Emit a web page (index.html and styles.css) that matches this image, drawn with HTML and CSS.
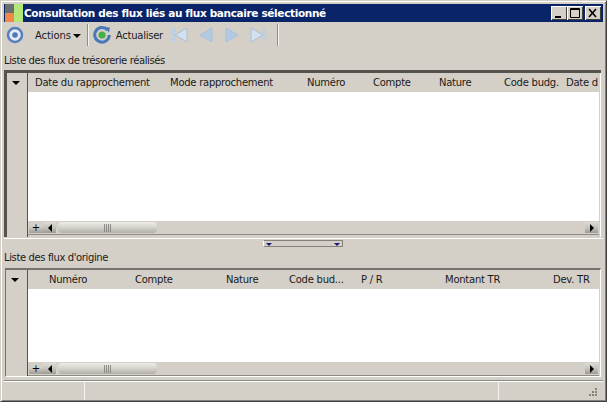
FILE: index.html
```html
<!DOCTYPE html>
<html lang="fr">
<head>
<meta charset="utf-8">
<title>Consultation des flux</title>
<link rel="stylesheet" href="styles.css">
</head>
<body>
<div class="window">
  <div class="titlebar">
    <svg class="app-icon" width="18" height="18" viewBox="0 0 18 18"><rect width="9" height="9" fill="#6a6f70"/><rect y="9" width="9" height="9" fill="#f0884a"/><rect x="9" width="9" height="18" fill="#b4e678"/></svg>
    <span class="title">Consultation des flux liés au flux bancaire sélectionné</span>
    <div class="winbtns">
      <span class="winbtn"><svg width="16" height="14" viewBox="0 0 16 14"><rect x="4" y="10" width="6" height="2" fill="#000"/></svg></span>
      <span class="winbtn"><svg width="16" height="14" viewBox="0 0 16 14"><path d="M3.500 2.500h9v9h-9zM3 3.500h10" fill="none" stroke="#000"/></svg></span>
      <span class="winbtn close"><svg width="16" height="14" viewBox="0 0 16 14"><path d="M4 3l7 8M11 3l-7 8" stroke="#000" stroke-width="1.600" fill="none"/></svg></span>
    </div>
  </div>

  <div class="toolbar">
    <svg class="ring" width="18" height="18" viewBox="0 0 18 18"><circle cx="9" cy="9" r="7" fill="#e6eaf2" stroke="#5580bd" stroke-width="2.500"/><circle cx="9" cy="9" r="2.800" fill="#4a78b8"/></svg>
    <span class="tb-text actions">Actions</span>
    <span class="caret"></span>
    <span class="sep"></span>
    <svg class="refresh" width="18" height="18" viewBox="0 0 18 18"><path d="M14.500 4A7.300 7.300 0 1 0 16.300 9" fill="none" stroke="#4a78b8" stroke-width="3"/><path d="M11.500 1l5.500 .5-1 5z" fill="#4a78b8"/><circle cx="9" cy="9" r="3.600" fill="#45b04a"/></svg>
    <span class="tb-text refresh-label">Actualiser</span>
    <svg class="nav first" width="17" height="16" viewBox="0 0 17 16"><path d="M1 1h3v14H1z" fill="#bccfe3"/><path d="M16 1v14L4 8z" fill="#d3e0ee" stroke="#a8c0da"/></svg>
    <svg class="nav prev" width="14" height="16" viewBox="0 0 14 16"><path d="M13 1v14L1 8z" fill="#b4cae2" stroke="#a8c0da"/></svg>
    <svg class="nav next" width="14" height="16" viewBox="0 0 14 16"><path d="M1 1v14l12-7z" fill="#b4cae2" stroke="#a8c0da"/></svg>
    <svg class="nav last" width="17" height="16" viewBox="0 0 17 16"><path d="M13 1h3v14h-3z" fill="#bccfe3"/><path d="M1 1v14l12-7z" fill="#d3e0ee" stroke="#a8c0da"/></svg>
    <span class="sep end"></span>
  </div>

  <div class="section-label first-label">Liste des flux de trésorerie réalisés</div>
  <section class="grid grid-top">
    <div class="grid-side"><span class="down"></span><span class="side-fill"></span></div>
    <div class="grid-main">
      <div class="headers cols-top">
        <span>Date du rapprochement</span><span>Mode rapprochement</span><span>Numéro</span><span>Compte</span><span>Nature</span><span>Code budg.</span><span>Date d</span>
      </div>
      <div class="rows"></div>
      <div class="scrollbar">
        <span class="sb-btn plus">+</span>
        <span class="sb-btn"><i class="arrow-l"></i></span>
        <span class="thumb"><i></i><i></i><i></i><i></i></span>
        <span class="sb-track"></span>
        <span class="sb-btn"><i class="arrow-r"></i></span>
      </div>
    </div>
  </section>

  <div class="splitter">
    <div class="split-handle"><i></i><i></i></div>
  </div>

  <div class="section-label second-label">Liste des flux d'origine</div>
  <section class="grid grid-bottom">
    <div class="grid-side"><span class="down"></span><span class="side-fill"></span></div>
    <div class="grid-main">
      <div class="headers cols-bottom">
        <span>Numéro</span><span>Compte</span><span>Nature</span><span>Code bud...</span><span>P / R</span><span>Montant TR</span><span>Dev. TR</span>
      </div>
      <div class="rows"></div>
      <div class="scrollbar">
        <span class="sb-btn plus">+</span>
        <span class="sb-btn"><i class="arrow-l"></i></span>
        <span class="thumb"><i></i><i></i><i></i><i></i></span>
        <span class="sb-track"></span>
        <span class="sb-btn"><i class="arrow-r"></i></span>
      </div>
    </div>
  </section>

  <footer class="statusbar">
    <span class="cell c1"></span>
    <span class="cell c2"></span>
    <span class="cell c3">
      <svg width="10" height="10" viewBox="0 0 10 10"><path d="M7 0h2v2H7zM4 3h2v2H4zM7 3h2v2H7zM1 6h2v2H1zM4 6h2v2H4zM7 6h2v2H7z" fill="#85827b"/></svg>
    </span>
  </footer>
</div>
</body>
</html>
```
FILE: styles.css
```css
* { box-sizing: border-box; }
html, body { margin: 0; padding: 0; }
body {
  width: 607px;
  height: 402px;
  overflow: hidden;
  background: #d4d0c8;
  font-family: "DejaVu Sans", sans-serif;
  font-size: 10px;
  color: #1a1a1a;
}
.window {
  width: 607px;
  height: 402px;
  display: flex;
  flex-direction: column;
  background: #d4d0c8;
  border-top: 1px solid #d4d0c8;
  border-left: 1px solid #d4d0c8;
  border-right: 1px solid #404040;
  border-bottom: 1px solid #404040;
  padding: 3px;
  box-shadow: inset 1px 1px 0 #fff, inset -1px -1px 0 #808080;
}

.titlebar {
  height: 18px;
  flex: none;
  background: #0a246a;
  display: flex;
  align-items: center;
}
.app-icon { flex: none; margin-left: 1px; }
.title {
  margin-left: 1px;
  color: #fff;
  font-weight: 700;
  font-size: 10.500px;
  letter-spacing: -0.35px;
  white-space: nowrap;
}
.winbtns { margin-left: auto; display: flex; margin-right: 2px; }
.winbtn {
  width: 16px;
  height: 14px;
  background: #d4d0c8;
  display: block;
  box-shadow: inset 1px 1px 0 #fff, inset -1px -1px 0 #404040;
}
.winbtn svg { display: block; }
.winbtn.close { margin-left: 2px; }

.toolbar {
  height: 26px;
  flex: none;
  display: flex;
  align-items: center;
  padding-left: 2px;
}
.tb-text { font-size: 10px; letter-spacing: -0.1px; white-space: nowrap; }
.actions { margin-left: 11px; }
.caret {
  margin-left: 2px;
  margin-top: 2px;
  border: 4px solid transparent;
  border-top-color: #000;
  border-bottom-width: 0;
}
.sep {
  width: 1px;
  height: 22px;
  margin-left: 6px;
  background: #8f8d87;
  box-shadow: 1px 0 0 #f4f3ef;
}
.refresh { margin-left: 5px; }
.refresh-label { margin-left: 5px; letter-spacing: -0.25px; }
.nav { flex: none; }
.first { margin-left: 8px; }
.prev { margin-left: 11px; }
.next { margin-left: 12px; }
.last { margin-left: 11px; }
.sep.end { margin-left: 10px; }

.section-label {
  flex: none;
  height: 15px;
  line-height: 15px;
  font-size: 10px;
  letter-spacing: -0.38px;
  white-space: nowrap;
}
.first-label { margin-top: 5px; }
.second-label { margin-top: 0; }

.grid {
  flex: none;
  display: flex;
  margin-right: 2px;
  background: #d4d0c8;
}
.grid-top {
  height: 167px;
  margin-top: 2px;
  border-top: 3px solid #55534e;
  border-left: 3px solid #55534e;
  padding-right: 2px;
  box-shadow: inset -1px 0 0 #fff;
}
.grid-bottom {
  height: 109px;
  margin-top: 3px;
  margin-left: 1px;
  border-top: 2px solid #75736d;
  border-left: 1px solid #75736d;
  border-right: 1px solid #fff;
  border-bottom: 1px solid #fff;
  padding-right: 1px;
}
.grid-side {
  width: 21px;
  flex: none;
  display: flex;
  flex-direction: column;
  border-right: 1px solid #55534e;
}
.grid-bottom .grid-side { width: 22px; }
.down {
  height: 19px;
  flex: none;
  position: relative;
}
.down::after {
  content: "";
  position: absolute;
  left: 5px;
  top: 8px;
  border: 4px solid transparent;
  border-top-color: #000;
  border-bottom-width: 0;
}
.side-fill { flex: 1; }
.grid-main {
  flex: 1;
  min-width: 0;
  display: flex;
  flex-direction: column;
}
.headers {
  height: 19px;
  flex: none;
  display: grid;
  align-items: center;
  overflow: hidden;
  white-space: nowrap;
  font-size: 10px;
  letter-spacing: -0.25px;
}
.headers span { overflow: hidden; }
.cols-top {
  padding-left: 7px;
  grid-template-columns: 135px 137px 66px 66px 65px 62px 33px;
}
.cols-bottom {
  padding-left: 21px;
  grid-template-columns: 86px 91px 63px 72px 84px 108px 45px;
}
.rows { flex: 1; background: #fff; }
.scrollbar {
  height: 14px;
  flex: none;
  display: flex;
  padding: 1px;
  align-items: stretch;
  background: #d4d0c8;
  border-bottom: 1px solid #8d8b85;
}
.grid-top .scrollbar { margin-bottom: 2px; }
.sb-btn {
  width: 13px;
  flex: none;
  background: linear-gradient(#dedcd6, #c3c1ba 55%, #9b9992);
  display: flex;
  align-items: center;
  justify-content: center;
}
.plus {
  width: 14px;
  color: #000;
  font-size: 10px;
  line-height: 12px;
  background: linear-gradient(#d4d0c8, #d4d0c8 40%, #a09e97);
}
.arrow-l, .arrow-r {
  width: 0;
  height: 0;
  border: 4px solid transparent;
}
.arrow-l { border-right-color: #000; border-left-width: 0; }
.arrow-r { border-left-color: #000; border-right-width: 0; }
.thumb {
  width: 99px;
  flex: none;
  margin-left: 2px;
  border-radius: 4px;
  background: linear-gradient(#eeece8, #d4d2cb 50%, #b1afa8);
  display: flex;
  justify-content: center;
  align-items: center;
  gap: 1px;
}
.thumb i { width: 1px; height: 8px; background: #8d8b85; }
.sb-track { flex: 1; }

.splitter {
  height: 12px;
  flex: none;
  margin-top: 1px;
  border-top: 1px solid #fff;
  display: flex;
  justify-content: center;
  align-items: flex-start;
  padding-top: 1px;
  padding-right: 2px;
}
.split-handle {
  width: 80px;
  height: 7px;
  background: #d4d0c8;
  border: 1px solid #85827b;
  border-left-color: #fff;
  display: flex;
  justify-content: space-between;
  padding: 2px 2px 0;
}
.split-handle i {
  width: 0;
  height: 0;
  border: 3.500px solid transparent;
  border-top-color: #15157a;
  border-bottom-width: 0;
}

.statusbar {
  flex: 1;
  display: flex;
  margin-top: 3px;
  border-top: 1px solid #8d8b85;
  box-shadow: inset 0 1px 0 #fff;
}
.cell { display: block; height: 18px; margin-top: 1px; box-shadow: 1px 0 0 #f6f5f1; }
.c1 { width: 80px; }
.c2 { width: 414px; }
.c3 { flex: 1; display: flex; justify-content: flex-end; align-items: flex-end; padding: 0 5px 2px 0; box-shadow: none; }
```
